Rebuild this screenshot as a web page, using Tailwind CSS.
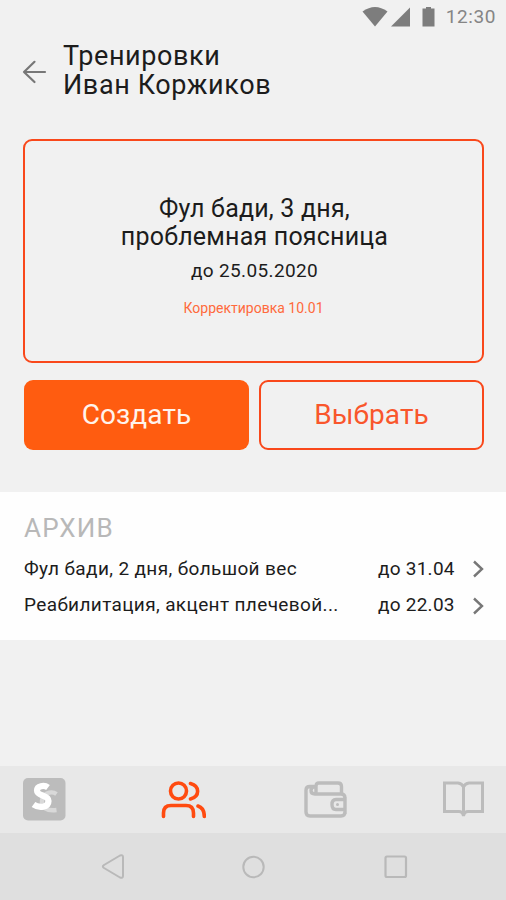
<!DOCTYPE html>
<html lang="ru">
<head>
<meta charset="utf-8">
<title>Тренировки</title>
<script src="https://cdn.jsdelivr.net/npm/@tailwindcss/browser@4"></script>
</head>
<body class="bg-[#f1f1f1]">
<div class="w-[506px] h-[900px] overflow-hidden flex flex-col bg-[#f1f1f1] font-['Roboto',sans-serif] text-[#1c1c1c] whitespace-nowrap">
  <div class="h-[34px] shrink-0 flex items-center justify-end pr-[10px] text-[#858585]">
    <svg class="w-[26px] h-[20px]" viewBox="0 0 26 20" fill="#7d7d7d"><path d="M0.5 4.5Q13-4.5 25.500 4.500L13 19.500Z"/></svg>
    <svg class="w-[20px] h-[20px] ml-[3px]" viewBox="0 0 20 20" fill="#7d7d7d"><path d="M0 19.500L19 0.500V19.500Z"/></svg>
    <svg class="w-[14px] h-[20px] ml-[11px]" viewBox="0 0 14 20" fill="#7d7d7d"><path d="M4 0h5v1.500h3.500v18H0.500v-18H4Z"/></svg>
    <span class="ml-[10px] text-[19px] leading-5 tracking-[0.6px]">12:30</span>
  </div>
  <header class="h-[105px] shrink-0 flex items-start pl-[22px] pt-[8px]">
    <svg class="w-[25px] h-[24px] mt-[18px]" viewBox="0 0 25 24" fill="none" stroke="#777" stroke-width="2.200" stroke-linecap="round" stroke-linejoin="round"><path d="M23 12H2M12.500 1.800L2 12l10.500 10"/></svg>
    <h1 class="ml-[16px] text-[27px] leading-[29px] tracking-[0.6px]">Тренировки<br>Иван Коржиков</h1>
  </header>
  <section class="ml-[23px] mr-[22px] h-[224px] shrink-0 rounded-[9px] border-2 border-[#f9481b] flex flex-col items-center pt-[54px]">
    <h2 class="pl-[2px] text-center text-[25px] leading-[28px] tracking-[0.2px]">Фул бади, 3 дня,<br>проблемная поясница</h2>
    <p class="pl-[2px] mt-[9px] text-[19px] leading-[22px] tracking-[0.35px]">до 25.05.2020</p>
    <p class="mt-[16px] text-[14px] leading-[20px] tracking-[0px] text-[#ff6a3c]">Корректировка 10.01</p>
  </section>
  <div class="mt-[17px] ml-[24px] mr-[22px] h-[70px] shrink-0 flex gap-[10px] text-[28px]">
    <button class="w-[225px] rounded-[9px] bg-[#ff5c10] text-[#fff3ec] tracking-[0.1px]">Создать</button>
    <button class="w-[225px] rounded-[9px] border-2 border-[#f9481b] text-[#f9562c] tracking-[0.1px]">Выбрать</button>
  </div>
  <section class="mt-[42px] h-[148px] shrink-0 bg-[#fefefe] pt-[21px] pl-[24px] pr-[20px]">
    <h3 class="text-[26px] leading-[30px] tracking-[1.2px] text-[#b8b8b8]">АРХИВ</h3>
    <div class="mt-[8px] h-[36px] flex items-center text-[19px]">
      <span class="tracking-[0.37px]">Фул бади, 2 дня, большой вес</span><span class="ml-auto w-[78px] tracking-[0.25px]">до 31.04</span>
      <svg class="ml-[16px] mr-[1px] w-[13px] h-[18px]" viewBox="0 0 13 18" fill="none" stroke="#777" stroke-width="2.400"><path d="M2 1.500L10 9L2 16.500"/></svg>
    </div>
    <div class="h-[37px] flex items-center text-[19px]">
      <span class="tracking-[0.37px]">Реабилитация, акцент плечевой...</span><span class="ml-auto w-[78px] tracking-[0.25px]">до 22.03</span>
      <svg class="ml-[16px] mr-[1px] w-[13px] h-[18px]" viewBox="0 0 13 18" fill="none" stroke="#777" stroke-width="2.400"><path d="M2 1.500L10 9L2 16.500"/></svg>
    </div>
  </section>
  <nav class="mt-auto h-[67px] shrink-0 bg-[#e8e8e8] flex items-center pl-[23px]">
    <svg class="w-[43px] h-[43px]" viewBox="0 0 43 43"><rect width="42.500" height="42.500" rx="5" fill="#bcbcbc"/><g fill="none"><path d="M33.500 16Q29 13 24 15.500Q18 19 19 26Q21 33.500 33.500 32" stroke="#d9d9d9" stroke-width="4.400"/><path d="M25 9.500C21 6.500 14 8 14 12.500C14 18.500 25.500 16.500 25.500 23C25.500 29.500 16 30.500 10.500 26.500" stroke="#fff" stroke-width="6.200"/></g></svg>
    <svg class="ml-[92px] w-[48px] h-[42px]" viewBox="0 0 48 42" fill="none" stroke="#ff4b10" stroke-width="3.600" stroke-linecap="round"><circle cx="20.500" cy="12" r="8"/><path d="M5.500 37.500V34Q5.500 26.500 13 26.500H28Q35.500 26.500 35.500 34V37.500M32.500 4.500C42 7 42 17.500 32.500 20M40 27Q46.300 29 46.300 37.500"/></svg>
    <svg class="ml-[98px] w-[44px] h-[40px]" viewBox="0 0 44 40" fill="none" stroke="#bcbcbc" stroke-width="3.400" stroke-linejoin="round"><path d="M10 6.500H6Q2 6.500 2 10V32Q2 36 6 36H37Q41 36 41 32V30M41 20V18Q41 14 37 14H11Q7 14 7 10.500Q7 7 11 6.500M12 14V6Q12 3 15 3H34Q37.500 3 37.500 6.500V14M41 19.500H32Q28 19.500 28 24.500Q28 29.500 32 29.500H41ZM41 17V34"/><circle cx="33.500" cy="24.500" r="1.500" fill="#bcbcbc" stroke="none"/></svg>
    <svg class="ml-[94px] w-[42px] h-[40px]" viewBox="0 0 42 40" fill="none" stroke="#bcbcbc" stroke-width="3"><path d="M2.500 3H16Q20 3.500 21.500 7Q23 3.500 27 3H40.500V31.500H26Q22.500 31.500 21.500 36Q20.500 31.500 17 31.500H2.500ZM21.500 7V35"/></svg>
  </nav>
  <div class="h-[67px] shrink-0 bg-[#dfdfdf] flex items-center">
    <svg class="ml-[101px] w-[24px] h-[26px]" viewBox="0 0 24 26" fill="none" stroke="#b9b9b9" stroke-width="2" stroke-linejoin="round"><path d="M2 12Q1.500 13 3 14L19 23.500Q22 24.500 22 22V3Q22 0.500 19 1.500L3 11Z"/></svg>
    <svg class="ml-[116px] w-[24px] h-[24px]" viewBox="0 0 24 24" fill="none" stroke="#b9b9b9" stroke-width="2"><circle cx="12.500" cy="12" r="10.200"/></svg>
    <svg class="ml-[119px] w-[24px] h-[24px]" viewBox="0 0 24 24" fill="none" stroke="#b9b9b9" stroke-width="2.200"><rect x="1.500" y="1.500" width="20.500" height="20.500" rx="1.500"/></svg>
  </div>
</div>
</body>
</html>
